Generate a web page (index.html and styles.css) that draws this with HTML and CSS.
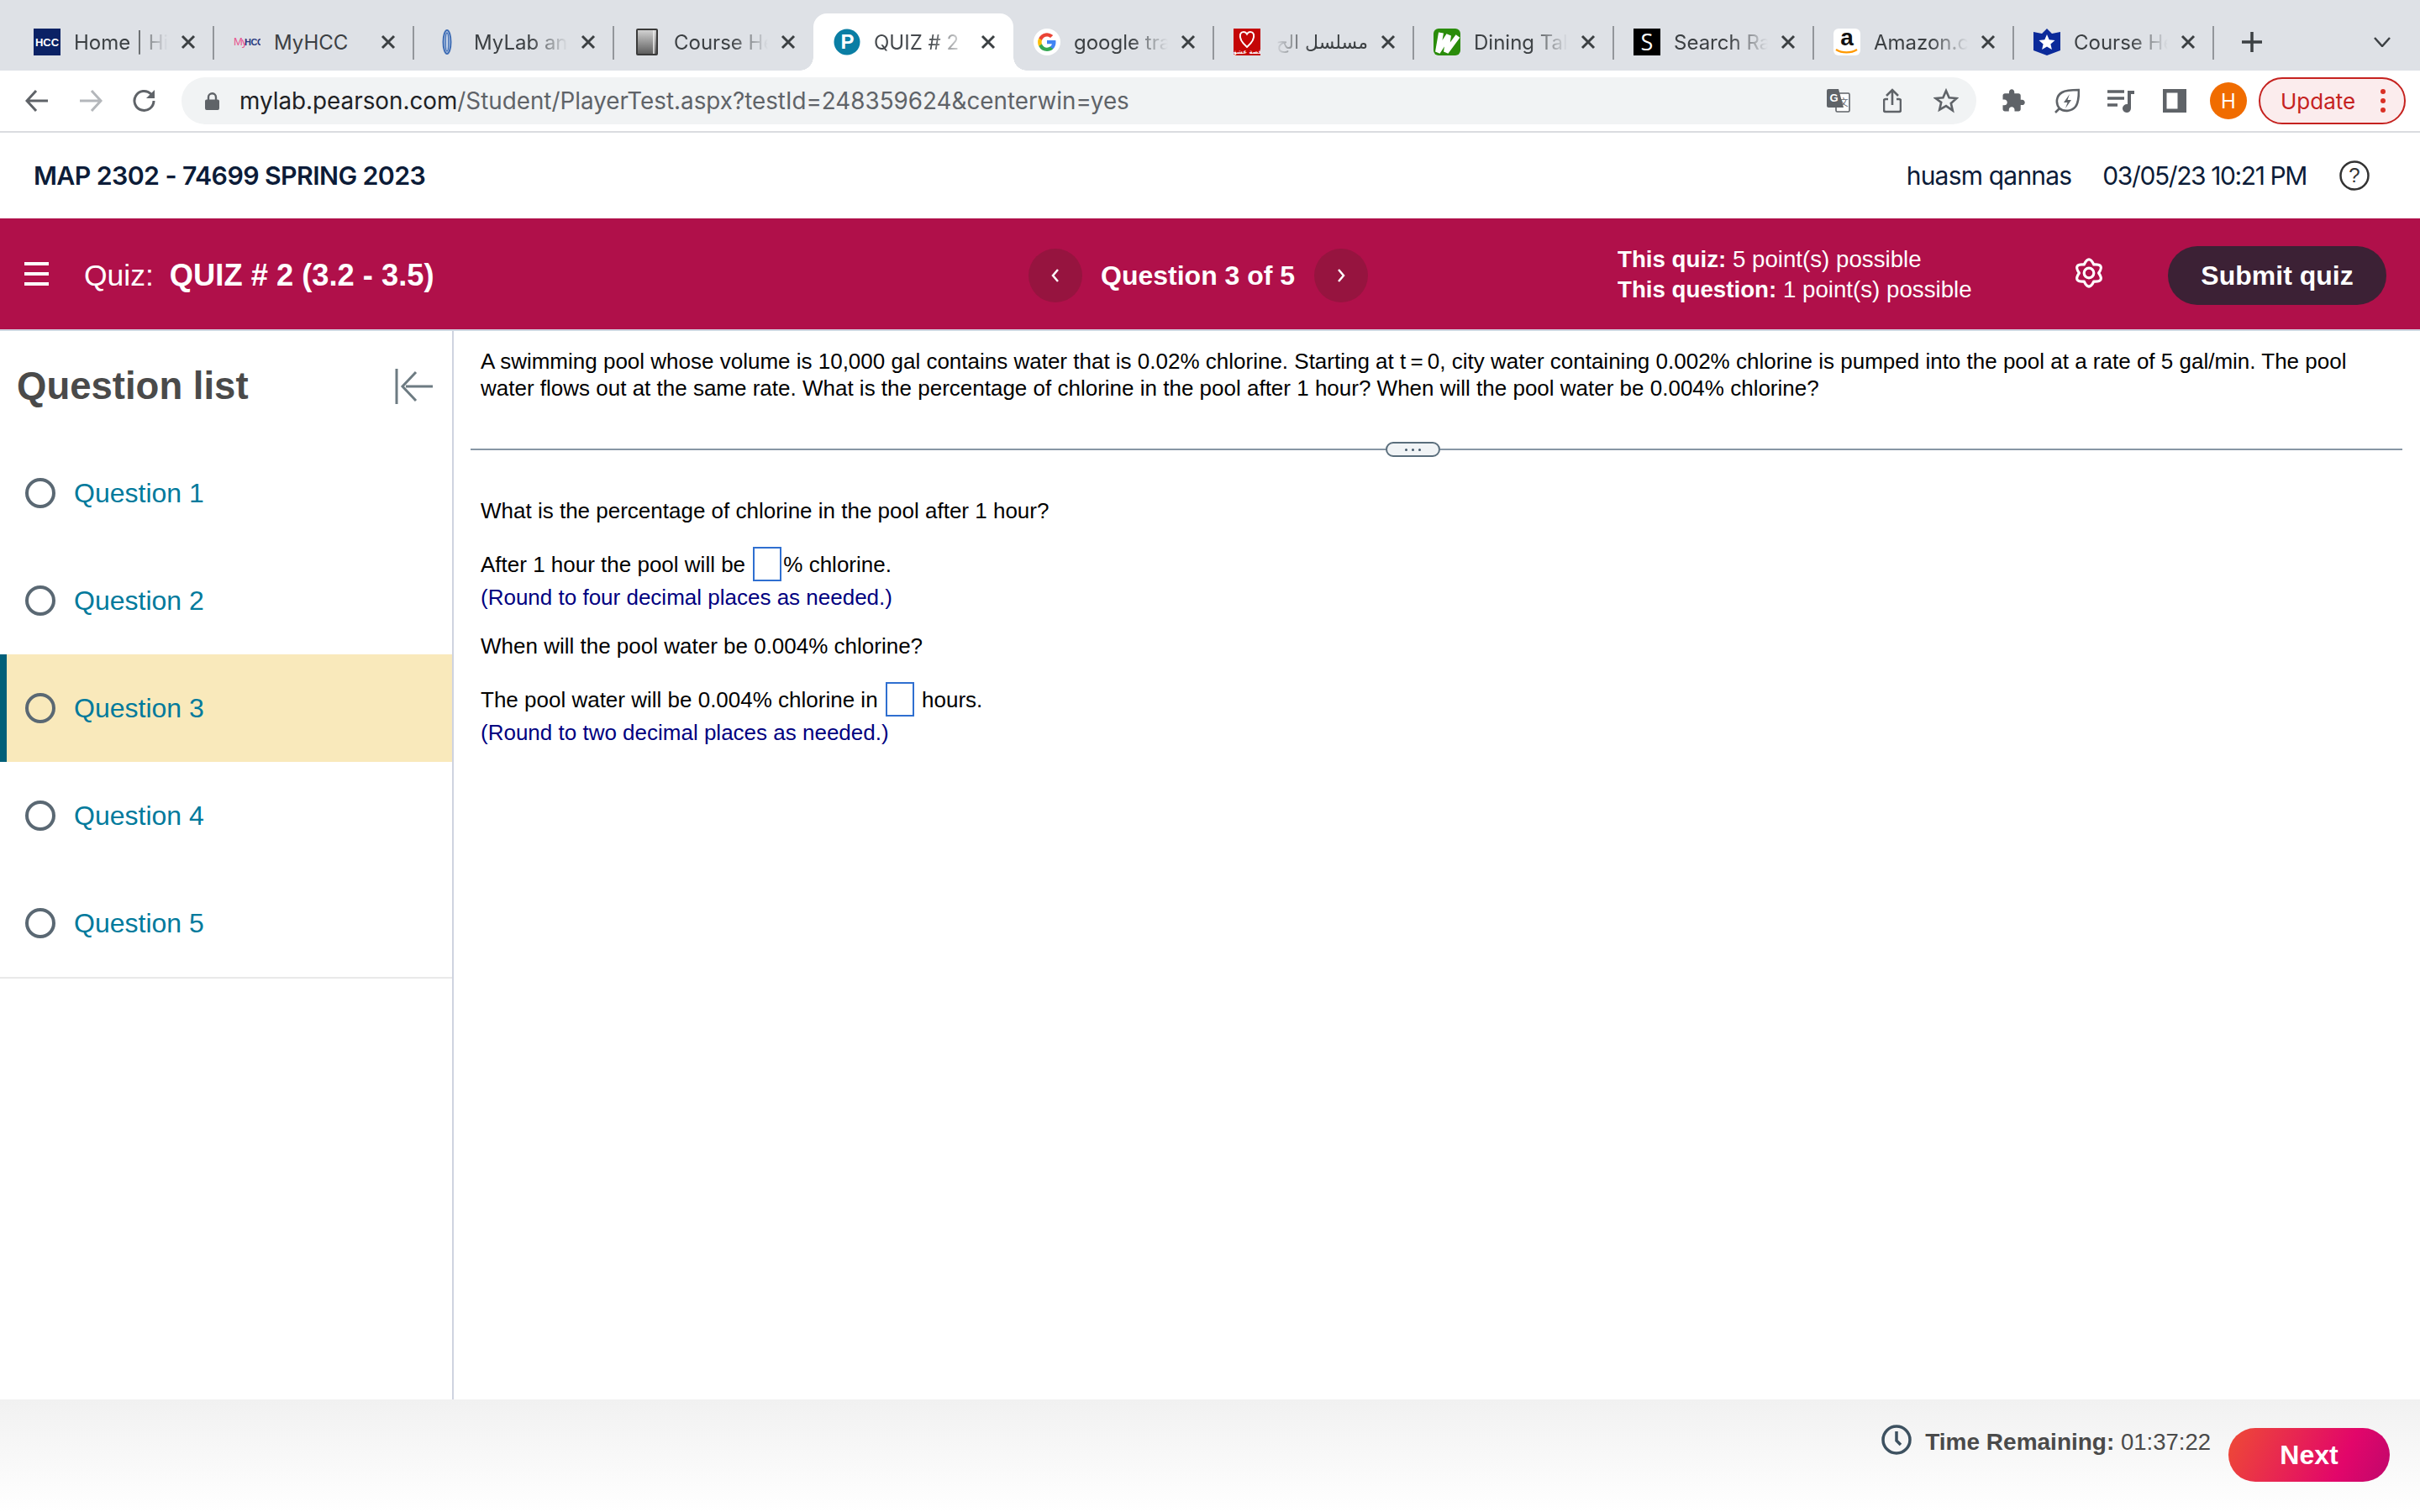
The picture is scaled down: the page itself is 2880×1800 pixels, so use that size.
FILE: index.html
```html
<!DOCTYPE html>
<html lang="en">
<head>
<meta charset="utf-8">
<title>QUIZ # 2</title>
<link rel="stylesheet" href="styles.css">
</head>
<body>
<div class="page">
  <div class="tabstrip">
    <div class="tab sep">
      <svg class="fav" viewBox="0 0 32 32"><rect width="32" height="32" fill="#0b2265"/><text x="16" y="20.5" class="fav-hcc">HCC</text></svg>
      <span class="tab-title">Home | Hi</span>
      <svg class="close" viewBox="0 0 18 18"><path d="M2 2 16 16M16 2 2 16"/></svg>
    </div>
    <div class="tab sep">
      <svg class="fav" viewBox="0 0 32 32"><text x="0" y="20" class="fav-my">My</text><text x="13" y="20" class="fav-myhcc">HCC</text></svg>
      <span class="tab-title plain">MyHCC</span>
      <svg class="close" viewBox="0 0 18 18"><path d="M2 2 16 16M16 2 2 16"/></svg>
    </div>
    <div class="tab sep">
      <svg class="fav" viewBox="0 0 32 32"><ellipse cx="16" cy="16" rx="4.500" ry="14" fill="#c9d6ea" stroke="#3f6db5" stroke-width="2"/><ellipse cx="16" cy="16" rx="1.800" ry="11" fill="none" stroke="#3f6db5" stroke-width="1.400"/></svg>
      <span class="tab-title">MyLab an</span>
      <svg class="close" viewBox="0 0 18 18"><path d="M2 2 16 16M16 2 2 16"/></svg>
    </div>
    <div class="tab">
      <svg class="fav" viewBox="0 0 32 32"><defs><linearGradient id="chg" x1="0" y1="0" x2="0" y2="1"><stop offset="0" stop-color="#d5d5d5"/><stop offset="1" stop-color="#5a5a5a"/></linearGradient></defs><rect x="4" y="1" width="24" height="30" rx="1" fill="url(#chg)" stroke="#3a3a3a" stroke-width="2"/><path d="M24 2v28" stroke="#eee" stroke-width="1.500"/></svg>
      <span class="tab-title">Course He</span>
      <svg class="close" viewBox="0 0 18 18"><path d="M2 2 16 16M16 2 2 16"/></svg>
    </div>
    <div class="tab active">
      <svg class="fav" viewBox="0 0 32 32"><circle cx="16" cy="16" r="15.500" fill="#0a7ea4"/><text x="16.500" y="24" class="fav-p">P</text></svg>
      <span class="tab-title">QUIZ # 2</span>
      <svg class="close" viewBox="0 0 18 18"><path d="M2 2 16 16M16 2 2 16"/></svg>
    </div>
    <div class="tab sep">
      <svg class="fav" viewBox="0 0 32 32"><circle cx="16" cy="16" r="16" fill="#fff"/><path d="M26.500 16.300c0-.8-.1-1.500-.2-2.200H16v4.200h5.900a5 5 0 0 1-2.200 3.300v2.700h3.500c2.100-1.900 3.300-4.700 3.300-8z" fill="#4285f4"/><path d="M16 27c3 0 5.400-1 7.200-2.700l-3.500-2.700c-1 .7-2.200 1.100-3.700 1.100-2.800 0-5.200-1.900-6.100-4.500H6.300v2.800A11 11 0 0 0 16 27z" fill="#34a853"/><path d="M9.900 18.200a6.600 6.600 0 0 1 0-4.200v-2.800H6.300a11 11 0 0 0 0 9.800z" fill="#fbbc05"/><path d="M16 9.400c1.600 0 3 .5 4.100 1.600l3.100-3.100A11 11 0 0 0 6.300 11.200L9.900 14c.9-2.700 3.300-4.600 6.100-4.600z" fill="#ea4335"/></svg>
      <span class="tab-title">google tra</span>
      <svg class="close" viewBox="0 0 18 18"><path d="M2 2 16 16M16 2 2 16"/></svg>
    </div>
    <div class="tab sep">
      <svg class="fav" viewBox="0 0 32 32"><rect width="32" height="32" fill="#c40606"/><path d="M16 22C8 15 7 11 8 7c1-3.500 6-4 8-.5 2-3.500 7-3 8 .5 1 4 0 8-8 15z" fill="none" stroke="#fff" stroke-width="2"/><text x="16" y="30" class="fav-ar">قصة عشق</text></svg>
      <span class="tab-title rtl" dir="rtl">مسلسل الح</span>
      <svg class="close" viewBox="0 0 18 18"><path d="M2 2 16 16M16 2 2 16"/></svg>
    </div>
    <div class="tab sep">
      <svg class="fav" viewBox="0 0 32 32"><rect width="32" height="32" rx="6" fill="#2a8c0a"/><path d="M9 5 5 28 18 8 15 28 29 9" fill="none" stroke="#fff" stroke-width="6"/></svg>
      <span class="tab-title">Dining Tal</span>
      <svg class="close" viewBox="0 0 18 18"><path d="M2 2 16 16M16 2 2 16"/></svg>
    </div>
    <div class="tab sep">
      <svg class="fav" viewBox="0 0 32 32"><rect width="32" height="32" fill="#000"/><text x="16" y="26" class="fav-s">S</text></svg>
      <span class="tab-title">Search Ra</span>
      <svg class="close" viewBox="0 0 18 18"><path d="M2 2 16 16M16 2 2 16"/></svg>
    </div>
    <div class="tab sep">
      <svg class="fav" viewBox="0 0 32 32"><rect width="32" height="32" rx="6" fill="#fff"/><text x="16" y="20" class="fav-a">a</text><path d="M3 25c7 4.500 18 4.500 25 0" fill="none" stroke="#f90" stroke-width="2.400"/></svg>
      <span class="tab-title">Amazon.c</span>
      <svg class="close" viewBox="0 0 18 18"><path d="M2 2 16 16M16 2 2 16"/></svg>
    </div>
    <div class="tab sep">
      <svg class="fav" viewBox="0 0 32 32"><path d="M0 4 10 6 16 0 22 6 32 4V26L16 32 0 26z" fill="#0b2a9a"/><path d="m16 7 2.700 6.300 6.800.6-5.100 4.500 1.500 6.600-5.900-3.500-5.900 3.500 1.500-6.600-5.100-4.500 6.800-.6z" fill="#fff"/></svg>
      <span class="tab-title">Course He</span>
      <svg class="close" viewBox="0 0 18 18"><path d="M2 2 16 16M16 2 2 16"/></svg>
    </div>
    <svg class="newtab" viewBox="0 0 24 24"><path d="M12 0v24M0 12h24"/></svg>
    <svg class="tabmenu" viewBox="0 0 20 12"><path d="M1 1 10 11 19 1"/></svg>
  </div>

  <div class="toolbar">
    <div class="tbtn"><svg class="ic" viewBox="0 0 28 28"><path class="ln" d="M27 14H2M13 2 2 14l11 12"/></svg></div>
    <div class="tbtn"><svg class="ic" viewBox="0 0 28 28"><path class="ln faded" d="M1 14h25M15 2l11 12-11 12"/></svg></div>
    <div class="tbtn"><svg class="ic" viewBox="0 0 28 28"><path class="ln" d="M25 14a11.500 11.500 0 1 1-3.400-8.200L25 9"/><path class="fl" d="M26 1v10H16z"/></svg></div>
    <div class="omnibox">
      <svg class="lock" viewBox="0 0 18 22"><path class="fl" d="M3 9V6a6 6 0 0 1 12 0v3h1a2 2 0 0 1 2 2v9a2 2 0 0 1-2 2H2a2 2 0 0 1-2-2v-9a2 2 0 0 1 2-2zm2.500 0h7V6a3.500 3.500 0 0 0-7 0z"/></svg>
      <span class="url"><span class="url-host">mylab.pearson.com</span>/Student/PlayerTest.aspx?testId=248359624&amp;centerwin=yes</span>
      <div class="omni-actions">
        <div class="tbtn"><svg class="ic" viewBox="0 0 28 28"><rect x="11" y="5" width="16" height="22" rx="1.500" fill="#fff" stroke="#5f6368" stroke-width="1.600"/><path class="fl" d="M2 0h12l6 22H2a2 2 0 0 1-2-2V2a2 2 0 0 1 2-2z"/><text x="8.500" y="15" class="tr-g">G</text><text x="20" y="20" class="tr-x">文</text></svg></div>
        <div class="tbtn"><svg class="share" viewBox="0 0 22 30"><path class="ln thin" d="M11 20V2M4 9l7-7 7 7M6 13H3a2 2 0 0 0-2 2v11a2 2 0 0 0 2 2h16a2 2 0 0 0 2-2V15a2 2 0 0 0-2-2h-3"/></svg></div>
        <div class="tbtn"><svg class="star" viewBox="0 0 30 30"><path class="ln thin" d="m15 3 3.600 8.200 8.900.8-6.700 5.900 2 8.700L15 21.100l-7.800 4.500 2-8.700L2.500 12l8.900-.8z"/></svg></div>
      </div>
    </div>
    <div class="tbtn first"><svg class="ic30" viewBox="0 0 24 24"><path class="fl" d="M20.500 11H19V7c0-1.100-.9-2-2-2h-4V3.500C13 2.120 11.880 1 10.500 1S8 2.120 8 3.500V5H4c-1.100 0-1.990.9-1.990 2v3.800H3.500c1.490 0 2.700 1.210 2.700 2.700s-1.210 2.700-2.700 2.700H2V20c0 1.100.9 2 2 2h3.800v-1.500c0-1.490 1.210-2.700 2.700-2.700 1.490 0 2.700 1.210 2.700 2.700V22H17c1.100 0 2-.9 2-2v-4h1.500c1.380 0 2.500-1.120 2.500-2.500S21.880 11 20.500 11z"/></svg></div>
    <div class="tbtn"><svg class="ic30" viewBox="0 0 30 30"><path class="ln thin" d="M1 29 6 24M6 24C1 18 2 9 9 5c5-3 13-3 20-3 0 7 0 15-4 20-4 5-13 7-19 2z"/><path class="fl" d="M18 7l-7 10h4.500L13 24l7-10h-4.500z"/></svg></div>
    <div class="tbtn"><svg class="ic32" viewBox="0 0 32 28"><path class="ln bar" d="M0 3h20M0 11h20M0 19h12"/><path class="fl" d="M24 2h8v4h-4v17a5 5 0 1 1-4-4.900z"/></svg></div>
    <div class="tbtn"><svg class="ic" viewBox="0 0 28 28"><path class="fl" d="M0 0h28v28H0zM4.500 4.500v19h13v-19z" fill-rule="evenodd"/></svg></div>
    <div class="tbtn"><span class="avatar">H</span></div>
    <div class="update"><span>Update</span><span class="update-dots"><i></i><i></i><i></i></span></div>
  </div>

  <header class="titlebar">
    <h1 class="course">MAP 2302 - 74699 SPRING 2023</h1>
    <div class="user">
      <span class="uname">huasm qannas</span>
      <span class="udate">03/05/23 10:21 PM</span>
      <svg class="help" viewBox="0 0 36 36"><circle cx="18" cy="18" r="16.500"/><text x="18" y="26" class="help-q">?</text></svg>
    </div>
  </header>

  <section class="banner">
    <div class="b-left">
      <svg class="burger" viewBox="0 0 29 28"><path d="M0 2h29M0 14h29M0 26h29"/></svg>
      <span class="quiz-label">Quiz:</span>
      <strong class="quiz-name">QUIZ # 2 (3.2 - 3.5)</strong>
    </div>
    <div class="b-nav">
      <span class="round"><svg viewBox="0 0 10 16"><path d="M8 1 2 8l6 7"/></svg></span>
      <strong class="qnum">Question 3 of 5</strong>
      <span class="round"><svg viewBox="0 0 10 16"><path d="M2 1l6 7-6 7"/></svg></span>
    </div>
    <div class="b-info">
      <div><strong>This quiz:</strong> 5 point(s) possible</div>
      <div><strong>This question:</strong> 1 point(s) possible</div>
    </div>
    <svg class="gear" viewBox="0 0 36 36"><path d="M23.500 8.500Q36.200 7.500 29 18Q36.200 28.500 23.500 27.500Q18 39 12.500 27.500Q-.2 28.500 7 18Q-.2 7.500 12.500 8.500Q18-3 23.500 8.500Z"/><circle cx="18" cy="18" r="5.500"/></svg>
    <div class="submit">Submit quiz</div>
  </section>

  <main class="main">
    <aside class="sidebar">
      <div class="side-head">
        <h2>Question list</h2>
        <svg class="collapse" viewBox="0 0 46 42"><path d="M2 0v42M45 21H13M25 4 9 21l16 17"/></svg>
      </div>
      <ul class="qlist">
        <li><span class="radio"></span>Question 1</li>
        <li><span class="radio"></span>Question 2</li>
        <li class="current"><span class="radio"></span>Question 3</li>
        <li><span class="radio"></span>Question 4</li>
        <li><span class="radio"></span>Question 5</li>
      </ul>
    </aside>
    <div class="content">
      <p class="stem">A swimming pool whose volume is 10,000 gal contains water that is 0.02% chlorine. Starting at t&#8201;=&#8201;0, city water containing 0.002% chlorine is pumped into the pool at a rate of 5 gal/min. The pool water flows out at the same rate. What is the percentage of chlorine in the pool after 1 hour? When will the pool water be 0.004% chlorine?</p>
      <div class="divider"><span class="rule rule-left"></span><span class="grip"><i></i><i></i><i></i></span><span class="rule"></span></div>
      <div class="answers">
        <p class="line">What is the percentage of chlorine in the pool after 1 hour?</p>
        <p class="line ans">After 1 hour the pool will be <span class="box"></span>% chlorine.</p>
        <p class="line hint">(Round to four decimal places as needed.)</p>
        <p class="line next-q">When will the pool water be 0.004% chlorine?</p>
        <p class="line ans">The pool water will be 0.004% chlorine in <span class="box"></span> hours.</p>
        <p class="line hint">(Round to two decimal places as needed.)</p>
      </div>
    </div>
  </main>

  <footer class="footer">
    <svg class="clock" viewBox="0 0 36 36"><circle cx="18" cy="18" r="16"/><path d="M18 8v11l5 5"/></svg>
    <span class="time"><strong>Time Remaining:</strong> 01:37:22</span>
    <div class="next">Next</div>
  </footer>
</div>
</body>
</html>
```
FILE: styles.css
```css
* { box-sizing: border-box; }
html, body { margin: 0; padding: 0; background: #fff; }
.page {
  width: 2880px; height: 1800px; overflow: hidden;
  display: flex; flex-direction: column;
  font-family: "Liberation Sans", Arial, sans-serif; color: #000;
}

/* Tab strip */
.tabstrip {
  height: 84px; flex: none; background: #dee1e6;
  display: flex; align-items: flex-end; padding-left: 16px;
}
.tab {
  position: relative; width: 238px; height: 68px; flex: none;
  display: flex; align-items: center; padding-left: 24px;
  font-family: Inter, "Noto Sans", sans-serif; font-size: 24px; color: #3c4043;
}
.tab.sep::after {
  content: ""; position: absolute; right: -1px; top: 15px;
  width: 2px; height: 40px; background: #93969b;
}
.tab.active { background: #fff; border-radius: 16px 16px 0 0; color: #45494d; }
.tab.active::before, .tab.active::after {
  content: ""; position: absolute; bottom: 0; width: 16px; height: 16px;
}
.tab.active::before { left: -16px; background: radial-gradient(circle at 0 0, transparent 15.5px, #fff 16px); }
.tab.active::after { right: -16px; background: radial-gradient(circle at 100% 0, transparent 15.5px, #fff 16px); }
.fav { width: 32px; height: 32px; flex: none; }
.fav-hcc { font: 700 13px "Liberation Sans", sans-serif; fill: #fff; text-anchor: middle; }
.fav-my { font: 400 13px "Liberation Sans", sans-serif; fill: #e8558f; letter-spacing: -1px; }
.fav-myhcc { font: 700 11px "Liberation Sans", sans-serif; fill: #2a3a80; letter-spacing: -.5px; }
.fav-p { font: 700 24px "Liberation Sans", sans-serif; fill: #fff; text-anchor: middle; }
.fav-ar { font: 700 7px "DejaVu Sans", sans-serif; fill: #fff; text-anchor: middle; }
.fav-s { font: 400 27px "Open Sans", sans-serif; fill: #fff; text-anchor: middle; }
.fav-a { font: 700 28px "Liberation Sans", sans-serif; fill: #111; text-anchor: middle; }
.tab-title {
  width: 112px; margin-left: 16px; white-space: nowrap; flex: none;
  -webkit-mask-image: linear-gradient(to right, #000 60%, transparent 100%);
  mask-image: linear-gradient(to right, #000 60%, transparent 100%);
}
.tab-title.plain { -webkit-mask-image: none; mask-image: none; }
.tab-title.rtl {
  font-family: "DejaVu Sans", sans-serif; font-size: 22px;
  -webkit-mask-image: linear-gradient(to left, #000 60%, transparent 100%);
  mask-image: linear-gradient(to left, #000 60%, transparent 100%);
}
.close { width: 18px; height: 18px; margin-left: 15px; flex: none; }
.close path { stroke: #3c4043; stroke-width: 3; fill: none; }
.newtab { width: 24px; height: 24px; margin: 0 0 22px 34px; flex: none; }
.newtab path { stroke: #3c4043; stroke-width: 3.500; fill: none; }
.tabmenu { width: 20px; height: 12px; margin: 0 0 28px 133px; flex: none; }
.tabmenu path { stroke: #3c4043; stroke-width: 2.500; fill: none; }

/* Toolbar */
.toolbar {
  height: 74px; flex: none; background: #fff; border-bottom: 2px solid #dadce0;
  display: flex; align-items: center; padding: 0 0 0 12px;
}
.tbtn { width: 64px; height: 56px; flex: none; display: flex; align-items: center; justify-content: center; }
.tbtn.first { margin-left: 12px; }
.ic { width: 28px; height: 28px; }
.ic30 { width: 30px; height: 30px; }
.ic32 { width: 32px; height: 28px; }
.share { width: 22px; height: 30px; }
.star { width: 30px; height: 30px; }
.ln { fill: none; stroke: #5f6368; stroke-width: 3; }
.ln.thin { stroke-width: 2.600; }
.ln.bar { stroke-width: 3.500; }
.ln.faded { stroke: #b4b7bb; }
.fl { fill: #5f6368; }
.tr-g { font: 700 13px "Liberation Sans", sans-serif; fill: #fff; text-anchor: middle; }
.tr-x { font: 400 11px "Noto Sans CJK SC", sans-serif; fill: #5f6368; text-anchor: middle; }
.omnibox {
  width: 2136px; height: 56px; margin-left: 12px; flex: none; border-radius: 28px; background: #f1f3f4;
  display: flex; align-items: center; padding: 0 4px 0 28px;
}
.lock { width: 17px; height: 21px; flex: none; }
.url {
  margin-left: 24px; font-family: Inter, "Noto Sans", sans-serif; font-size: 27.800px; color: #5f6368; white-space: nowrap;
}
.url-host { color: #202124; }
.omni-actions { margin-left: auto; display: flex; }
.avatar {
  width: 44px; height: 44px; border-radius: 50%; background: #f06c00; color: #fff;
  font: 400 24px Inter, sans-serif; display: flex; align-items: center; justify-content: center;
}
.update {
  width: 175px; height: 56px; margin-left: 4px; flex: none; border: 2.500px solid #c5221f; border-radius: 28px;
  background: #fbeced; color: #c5221f; font: 400 26px Inter, sans-serif;
  display: flex; align-items: center; justify-content: space-between; padding: 0 22px 0 24px;
}
.update-dots { display: flex; flex-direction: column; gap: 5px; }
.update-dots i { width: 6px; height: 6px; border-radius: 50%; background: #d93025; display: block; }

/* Title bar */
.titlebar {
  height: 102px; flex: none; display: flex; align-items: center; justify-content: space-between;
  padding: 0 60px 0 40px; font-family: Inter, "Noto Sans", sans-serif; color: #0c1c38;
}
.course { margin: 0; font-size: 30.300px; font-weight: 600; letter-spacing: -.6px; }
.user { display: flex; align-items: center; gap: 37px; font-size: 30px; font-weight: 400; }
.uname { letter-spacing: -.8px; }
.udate { letter-spacing: -1.400px; margin-right: 2px; }
.help { width: 36px; height: 36px; }
.help circle { fill: none; stroke: #333; stroke-width: 2.500; }
.help-q { font: 400 24px "Liberation Sans", sans-serif; fill: #333; text-anchor: middle; }

/* Banner */
.banner {
  height: 134px; flex: none; background: #b0104a; border-bottom: 2px solid #cfd5e0; color: #fff;
  display: grid; grid-template-columns: 1224px 701px 543px 112px 1fr; align-items: center;
  padding-top: 4px;
}
.b-left { display: flex; align-items: center; padding-left: 29px; }
.burger { width: 29px; height: 28px; margin-top: -4px; }
.burger path { stroke: #fff; stroke-width: 4; fill: none; }
.quiz-label { margin-left: 42px; font-size: 35.500px; }
.quiz-name { margin-left: 19px; font-size: 36.300px; }
.b-nav { display: flex; align-items: center; }
.round {
  width: 64px; height: 64px; border-radius: 50%; background: #96143f; flex: none;
  display: flex; align-items: center; justify-content: center;
}
.round svg { width: 10px; height: 16px; }
.round path { stroke: #fff; stroke-width: 2.500; fill: none; }
.qnum { margin: 0 23px 0 22px; font-size: 32px; white-space: nowrap; }
.b-info { font-size: 27.700px; line-height: 36px; margin-top: -2px; }
.gear { width: 38px; height: 38px; margin: -6px 0 0 -1px; }
.gear path, .gear circle { fill: none; stroke: #fff; stroke-width: 3; stroke-linejoin: round; }
.submit {
  width: 260px; height: 70px; border-radius: 35px; background: #3c2135;
  font-size: 32px; font-weight: 700; display: flex; align-items: center; justify-content: center;
}

/* Main */
.main { flex: 1; min-height: 0; display: flex; }
.sidebar { width: 540px; flex: none; border-right: 2px solid #cfd3e0; }
.side-head {
  height: 129px; display: flex; align-items: center; justify-content: space-between;
  padding: 2px 22px 0 20px;
}
.side-head h2 { margin: 0; font-size: 45.500px; font-weight: 700; color: #4a4a4a; }
.collapse { width: 46px; height: 42px; }
.collapse path { fill: none; stroke: #6d7b82; stroke-width: 3; }
.qlist { list-style: none; margin: 0; padding: 0; border-bottom: 2px solid #e9e9e9; }
.qlist li {
  height: 128px; display: flex; align-items: center; padding-left: 30px;
  font-size: 32px; color: #007a9c;
}
.qlist li.current { background: #f9e9bb; box-shadow: inset 8px 0 0 #005f79; }
.radio { width: 36px; height: 36px; border-radius: 50%; border: 4px solid #5a6873; margin-right: 22px; flex: none; }

.content { flex: 1; min-width: 0; padding: 20px 21px 0 20px; font-size: 26px; line-height: 32px; }
.stem { margin: 0; padding: 0 12px; }
.divider { display: flex; align-items: center; margin-top: 48px; height: 18px; }
.rule { flex: 1; height: 2px; background: #8796a5; }
.rule-left { flex: none; width: 1089px; }
.grip {
  width: 65px; height: 18px; flex: none; border: 2.500px solid #5a6e7c; border-radius: 9px; background: #f1f4f6;
  display: flex; align-items: center; justify-content: center; gap: 5px;
}
.grip i { width: 3px; height: 3px; border-radius: 50%; background: #44586a; display: block; }
.answers { padding: 48px 12px 0; }
.line { margin: 0; height: 32px; white-space: nowrap; }
.line.ans { margin-top: 32px; }
.hint { margin-top: 7px; color: #000080; }
.next-q { margin-top: 26px; }
.box {
  display: inline-block; width: 34px; height: 41px; border: 2px solid #2f6fd0;
  vertical-align: middle; margin: -5px 2px 0 2px;
}

/* Footer */
.footer {
  height: 134px; flex: none; background: linear-gradient(#f1f1f1, #fff);
  display: flex; align-items: flex-start; justify-content: flex-end; padding: 34px 36px 0 0;
}
.clock { width: 36px; height: 36px; margin: -4px 16px 0 0; }
.clock circle, .clock path { fill: none; stroke: #3d5160; stroke-width: 3.500; }
.time { font-size: 27.500px; line-height: 36px; color: #4a4a4a; margin: -1px 21px 0 0; }
.time strong { font-size: 28px; }
.next {
  width: 192px; height: 64px; border-radius: 32px; color: #fff; font-size: 32px; font-weight: 700;
  background: linear-gradient(115deg, #ee4b35 0%, #e2066a 70%, #c0076c 100%);
  display: flex; align-items: center; justify-content: center;
}
```
